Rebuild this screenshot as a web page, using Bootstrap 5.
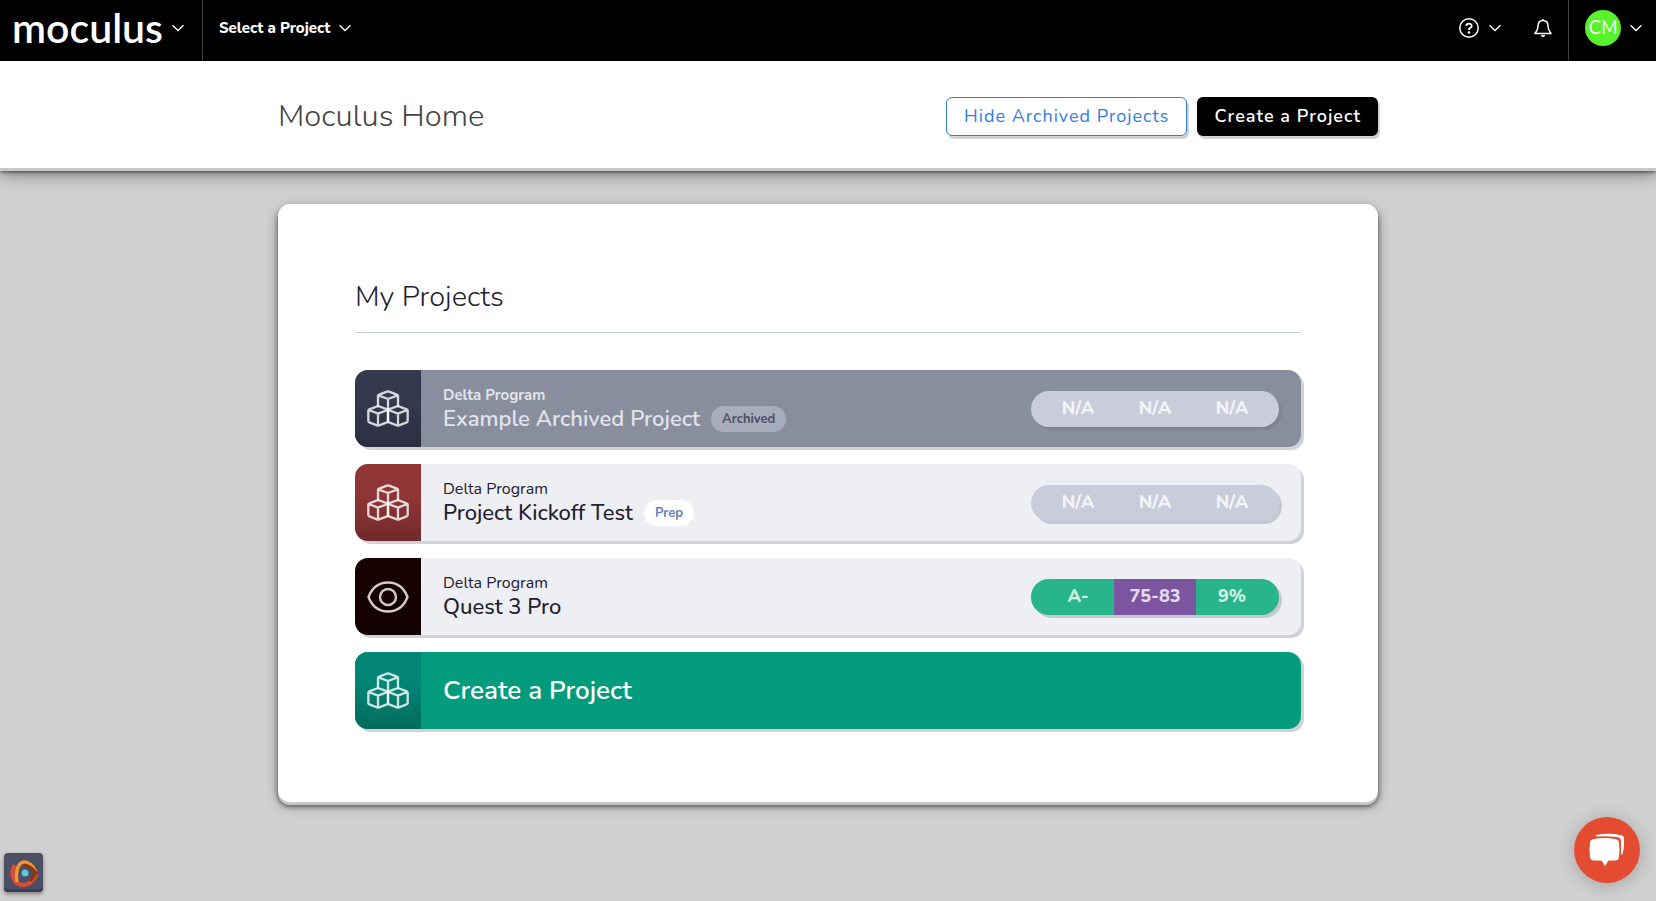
<!DOCTYPE html>
<html lang="en">
<head>
<meta charset="utf-8">
<meta name="viewport" content="width=device-width, initial-scale=1">
<title>Moculus Home</title>
<link href="https://cdn.jsdelivr.net/npm/bootstrap@5.3.0/dist/css/bootstrap.min.css" rel="stylesheet">
<style>
  body { font-family: Nunito, Lato, "Noto Sans", sans-serif; background: #d0d0d0; color: #1f2030; min-height: 100vh; }
  .topbar { background: #000; height: 61px; }
  .topbar button { background: none; border: 0; color: #fff; padding: 0 0 6px; }
  .topbar .divider { border-color: #444 !important; }
  .topbar .brand-menu { padding: 0 17px 6px 12px; }
  .topbar .account { padding: 0 13px 6px 16px; }
  .logo-word { font: 600 41px/48px Lato, sans-serif; }
  .picker { font-size: 15px; font-weight: 800; line-height: 24px; }
  .avatar { width: 36px; height: 36px; background: #58f22c; font-size: 19px; line-height: 36px; color: #fff; }
  .page-col { width: 100%; max-width: 1100px; }
  .page-head { background: #fff; height: 107px; padding-top: 3px; position: relative; box-shadow: 0 3px 0 #c8c8c8, 0 4px 4px rgba(0,0,0,.6), 0 6px 16px rgba(0,0,0,.4); }
  .page-head h1 { font-size: 31px; font-weight: 300; line-height: 40px; color: #444; }
  .acts { gap: 10px; }
  .act { height: 39px; border-radius: 6px; padding: 0 17px; font-size: 18px; line-height: 24px; letter-spacing: 1px; box-shadow: 2px 3px 0 #d1d1d8; }
  .act-hide { color: #2f7de1; background: #fff; border: 1px solid #2f7de1; }
  .act-new { color: #fff; background: #000; border: 0; font-weight: 600; }
  .panel { background: #fff; border-radius: 12px; margin-top: 36px; padding: 73px 77px; box-shadow: 0 3px 0 #c8c8c8, 0 4px 4px rgba(0,0,0,.5), 0 4px 12px rgba(0,0,0,.4); }
  .panel h2 { font-size: 29px; font-weight: 300; line-height: 40px; padding-bottom: 15px; border-bottom: 1px solid #c9ccda; margin-bottom: 37px; }
  .rows { gap: 17px; }
  .proj { height: 77px; border-radius: 13px; background: #eeeff3; box-shadow: 3px 3px 0 #d1d2d9; color: #1f2030; text-decoration: none; }
  .tile { width: 66px; border-radius: 13px 0 0 13px; background-image: linear-gradient(rgba(0,0,0,0) 40%, rgba(0,0,0,.2)); color: rgba(255,255,255,.8); }
  .names { padding-left: 22px; }
  .prog { font-size: 16px; line-height: 20px; }
  .pname { font-size: 22px; font-weight: 500; line-height: 28px; }
  .tag { font-size: 13px; font-weight: 700; line-height: 26px; border-radius: 13px; margin-left: 11px; padding: 0 11px; background: #fff; color: #6480bd; }
  .archived { background: #898e9e; color: #e2e3ea; }
  .archived .prog { font-size: 15px; font-weight: 700; }
  .archived .pname { font-weight: 600; }
  .archived .tag { background: #a8adbe; color: #4c5063; }
  .create { background: #029c7d; color: #fff; font-size: 26px; font-weight: 600; }
  .score { width: 248px; height: 36px; margin-right: 22px; border-radius: 18px; background: #c9ccda; color: rgba(255,255,255,.8); font-size: 18px; font-weight: 800; line-height: 34px; box-shadow: 3px 3px 0 #c5c8cf; overflow: hidden; text-align: center; }
  .archived .score { box-shadow: 3px 3px 0 #7f8394; }
  .score span { width: 82px; }
  .score span:first-child { width: 83px; padding-left: 11px; }
  .score span:last-child { width: 83px; padding-right: 11px; }
  .good { background: #29b58b; }
  .band { background: #7b559f; }
  .chat { width: 66px; height: 66px; right: 16px; bottom: 18px; border: 0; padding: 0; background: #e34c31; box-shadow: 0 2px 18px rgba(0,0,0,.22); }
  .widget { width: 39px; height: 39px; left: 4px; bottom: 9px; border: 0; padding: 0; border-radius: 4px; background: #4c5064; box-shadow: inset 0 -3px 0 #3b3e52, 0 2px 4px rgba(0,0,0,.4); }
</style>
</head>
<body>
<svg class="d-none" aria-hidden="true">
  <symbol id="cubes" viewBox="0 0 126 111"><g fill="none" stroke="currentColor" stroke-width="7" stroke-linejoin="round" stroke-linecap="round">
    <path d="M33 48V18Q33 15 36 14L60 5Q63 4 66 5L90 14Q93 15 93 18V48M34 16L63 27L92 16M63 27V59"/>
    <path d="M33 48L63 59V93Q63 96 60 97L36 106Q33 107 30 106L7 97Q4 96 4 93V62Q4 59 7 58ZM5 60L33 71L62 60M33 71V106"/>
    <path d="M93 48L63 59V93Q63 96 66 97L90 106Q93 107 96 106L119 97Q122 96 122 93V62Q122 59 119 58ZM121 60L93 71L64 60M93 71V106"/></g></symbol>
  <symbol id="chev" viewBox="0 0 14 8"><path d="M1.500 1.200L7 6.500L12.500 1.200" fill="none" stroke="currentColor" stroke-width="1.300"/></symbol>
</svg>
<nav class="topbar d-flex align-items-stretch justify-content-between text-white">
  <div class="d-flex">
    <button class="brand-menu d-flex align-items-center border-end divider" aria-label="Moculus menu"><span class="logo-word">moculus</span><svg class="ms-2" width="14" height="8"><use href="#chev"/></svg></button>
    <button class="picker d-flex align-items-center ms-3">Select a Project<svg class="ms-2" width="14" height="8"><use href="#chev"/></svg></button>
  </div>
  <div class="d-flex">
    <button class="d-flex align-items-center" aria-label="Help"><svg width="22" height="22" viewBox="0 0 22 22" fill="none" stroke="currentColor" stroke-width="1.500"><circle cx="11" cy="11" r="9.200"/><path d="M8.300 9C8.300 5.800 13.700 5.800 13.700 8.900C13.700 10.900 11 10.800 11 13" stroke-width="1.800"/><circle cx="11" cy="15.500" r=".6"/></svg><svg class="ms-2" width="14" height="8"><use href="#chev"/></svg></button>
    <button class="d-flex align-items-center ms-4 me-3 ps-2" aria-label="Notifications"><svg width="18" height="20" viewBox="0 0 18 20" fill="none" stroke="currentColor" stroke-width="1.500" stroke-linejoin="round"><path d="M9 1V2.500M9 2.500C5.500 2.500 4 5 4 8C4 12 2.500 13 1 15.500H17C15.500 13 14 12 14 8C14 5 12.500 2.500 9 2.500Z"/><path d="M7 17.500Q9 20 11 17.500Z" fill="currentColor" stroke-width=".8"/></svg></button>
    <button class="account d-flex align-items-center border-start divider" aria-label="Account"><span class="avatar rounded-circle">CM</span><svg class="ms-2" width="14" height="8"><use href="#chev"/></svg></button>
  </div>
</nav>
<header class="page-head d-flex justify-content-center align-items-center">
  <div class="page-col d-flex justify-content-between align-items-center">
    <h1 class="mb-0">Moculus Home</h1>
    <div class="acts d-flex"><button class="act act-hide">Hide Archived Projects</button><button class="act act-new">Create a Project</button></div>
  </div>
</header>
<main class="panel page-col mx-auto">
  <h2>My Projects</h2>
  <div class="rows d-flex flex-column">
    <a href="#" class="proj archived d-flex align-items-center">
      <span class="tile align-self-stretch d-flex align-items-center justify-content-center" style="background-color:#35394e"><svg width="42" height="37"><use href="#cubes"/></svg></span>
      <span class="names flex-grow-1"><span class="prog d-block">Delta Program</span><span class="d-flex align-items-center"><span class="pname">Example Archived Project</span><span class="tag">Archived</span></span></span>
      <span class="score d-flex"><span>N/A</span><span>N/A</span><span>N/A</span></span>
    </a>
    <a href="#" class="proj d-flex align-items-center">
      <span class="tile align-self-stretch d-flex align-items-center justify-content-center" style="background-color:#8f3535"><svg width="42" height="37"><use href="#cubes"/></svg></span>
      <span class="names flex-grow-1"><span class="prog d-block">Delta Program</span><span class="d-flex align-items-center"><span class="pname">Project Kickoff Test</span><span class="tag">Prep</span></span></span>
      <span class="score d-flex"><span>N/A</span><span>N/A</span><span>N/A</span></span>
    </a>
    <a href="#" class="proj d-flex align-items-center">
      <span class="tile align-self-stretch d-flex align-items-center justify-content-center" style="background-color:#160000"><svg width="42" height="34" viewBox="0 0 42 34" fill="none" stroke="currentColor" stroke-width="2.400"><path d="M1.500 17C5 8 12 2.500 21 2.500S37 8 40.500 17C37 26 30 31.500 21 31.500S5 26 1.500 17Z"/><circle cx="21" cy="17" r="8"/></svg></span>
      <span class="names flex-grow-1"><span class="prog d-block">Delta Program</span><span class="pname d-block">Quest 3 Pro</span></span>
      <span class="score d-flex"><span class="good">A-</span><span class="band">75-83</span><span class="good">9%</span></span>
    </a>
    <a href="#" class="proj create d-flex align-items-center">
      <span class="tile align-self-stretch d-flex align-items-center justify-content-center" style="background-color:#028575"><svg width="42" height="37"><use href="#cubes"/></svg></span>
      <span class="names">Create a Project</span>
    </a>
  </div>
</main>
<button class="widget position-fixed" aria-label="Developer tools"><svg width="28" height="28" viewBox="0 0 28 28" fill="none"><path d="M5 6C-1 15 4 26 14 26C21 25 25 19 27 14" stroke="#e04a30" stroke-width="4"/><path d="M7 23C5 11 9 3 14 3C19 3 23 7 26 13" stroke="#f79433" stroke-width="3.500"/><path d="M14 6C19 6 23 10 26 14L20 22" stroke="#93330d" stroke-width="3"/><circle cx="15" cy="14" r="3.500" fill="#5cc8d7"/></svg></button>
<button class="chat rounded-circle position-fixed" aria-label="Open chat"><svg width="36" height="34" viewBox="0 0 36 34"><path d="M7 2Q20 -.5 31 2Q35 2 35 6Q35.500 15 33.500 21L32 22V8Q32 4.500 28 4Q18 3 7 3.500Z" fill="#fff"/><path d="M5 6Q15 4 26 6Q30 6.500 30 10Q31 17 30 24Q29.500 27.500 26 27.500H19.500L16 33L12.500 27.500H5Q1.500 27.500 1 24Q0 17 1 10Q1 6.500 5 6Z" fill="#fff"/></svg></button>
<script src="https://cdn.jsdelivr.net/npm/bootstrap@5.3.0/dist/js/bootstrap.bundle.min.js"></script>
</body>
</html>
